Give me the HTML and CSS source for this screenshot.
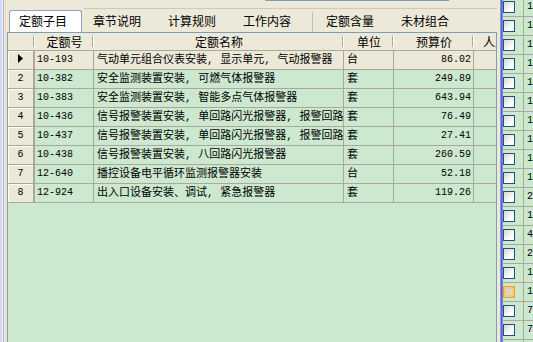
FILE: index.html
```html
<!DOCTYPE html>
<html lang="zh-CN">
<head>
  <meta charset="UTF-8">
  <meta name="viewport" content="width=device-width, initial-scale=1.0">
  <title>定额子目</title>
  <link rel="stylesheet" href="styles.css">
</head>
<body>
  <div class="app">
    <div class="edge"></div>

    <div class="main">
      <div class="tabbar">
        <div class="topline"></div>
        <div class="rule"></div>
        <div class="tabs">
          <div class="tab active">定额子目</div>
          <div class="tab">章节说明</div>
          <div class="tab">计算规则</div>
          <div class="tab">工作内容</div>
          <div class="tab-sep"></div>
          <div class="tab">定额含量</div>
          <div class="tab">未材组合</div>
        </div>
      </div>

      <div class="grid">
        <div class="row head">
          <div class="hc"></div>
          <div class="hc">定额号</div>
          <div class="hc">定额名称</div>
          <div class="hc">单位</div>
          <div class="hc">预算价</div>
          <div class="hc">人工费</div>
        </div>

        <div class="row current">
          <div class="c ind"><svg width="5" height="9" viewBox="0 0 5 9"><path d="M0 0 L5 4.5 L0 9 Z" fill="#000"/></svg></div>
          <div class="c num">10-193</div>
          <div class="c name">气动单元组合仪表安装, 显示单元, 气动报警器</div>
          <div class="c name">台</div>
          <div class="c num price">86.02</div>
          <div class="c"></div>
        </div>
        <div class="row">
          <div class="c ind">2</div>
          <div class="c num">10-382</div>
          <div class="c name">安全监测装置安装, 可燃气体报警器</div>
          <div class="c name">套</div>
          <div class="c num price">249.89</div>
          <div class="c"></div>
        </div>
        <div class="row">
          <div class="c ind">3</div>
          <div class="c num">10-383</div>
          <div class="c name">安全监测装置安装, 智能多点气体报警器</div>
          <div class="c name">套</div>
          <div class="c num price">643.94</div>
          <div class="c"></div>
        </div>
        <div class="row">
          <div class="c ind">4</div>
          <div class="c num">10-436</div>
          <div class="c name">信号报警装置安装, 单回路闪光报警器, 报警回路</div>
          <div class="c name">套</div>
          <div class="c num price">76.49</div>
          <div class="c"></div>
        </div>
        <div class="row">
          <div class="c ind">5</div>
          <div class="c num">10-437</div>
          <div class="c name">信号报警装置安装, 单回路闪光报警器, 报警回路</div>
          <div class="c name">套</div>
          <div class="c num price">27.41</div>
          <div class="c"></div>
        </div>
        <div class="row">
          <div class="c ind">6</div>
          <div class="c num">10-438</div>
          <div class="c name">信号报警装置安装, 八回路闪光报警器</div>
          <div class="c name">套</div>
          <div class="c num price">260.59</div>
          <div class="c"></div>
        </div>
        <div class="row">
          <div class="c ind">7</div>
          <div class="c num">12-640</div>
          <div class="c name">播控设备电平循环监测报警器安装</div>
          <div class="c name">台</div>
          <div class="c num price">52.18</div>
          <div class="c"></div>
        </div>
        <div class="row">
          <div class="c ind">8</div>
          <div class="c num">12-924</div>
          <div class="c name">出入口设备安装、调试, 紧急报警器</div>
          <div class="c name">套</div>
          <div class="c num price">119.26</div>
          <div class="c"></div>
        </div>
      </div>
    </div>

    <div class="splitter"></div>

    <div class="side">
      <div class="srows">
        <div class="srow"><div class="cb-cell"><div class="cb"></div></div><div class="sval">1</div></div>
        <div class="srow"><div class="cb-cell"><div class="cb"></div></div><div class="sval">1</div></div>
        <div class="srow"><div class="cb-cell"><div class="cb"></div></div><div class="sval">1</div></div>
        <div class="srow"><div class="cb-cell"><div class="cb"></div></div><div class="sval">1</div></div>
        <div class="srow"><div class="cb-cell"><div class="cb"></div></div><div class="sval">1</div></div>
        <div class="srow"><div class="cb-cell"><div class="cb"></div></div><div class="sval">1</div></div>
        <div class="srow"><div class="cb-cell"><div class="cb"></div></div><div class="sval">1</div></div>
        <div class="srow"><div class="cb-cell"><div class="cb"></div></div><div class="sval">1</div></div>
        <div class="srow"><div class="cb-cell"><div class="cb"></div></div><div class="sval">1</div></div>
        <div class="srow"><div class="cb-cell"><div class="cb"></div></div><div class="sval">1</div></div>
        <div class="srow"><div class="cb-cell"><div class="cb"></div></div><div class="sval">2</div></div>
        <div class="srow"><div class="cb-cell"><div class="cb"></div></div><div class="sval">1</div></div>
        <div class="srow"><div class="cb-cell"><div class="cb"></div></div><div class="sval">4</div></div>
        <div class="srow"><div class="cb-cell"><div class="cb"></div></div><div class="sval">2</div></div>
        <div class="srow"><div class="cb-cell"><div class="cb"></div></div><div class="sval">1</div></div>
        <div class="srow"><div class="cb-cell"><div class="cb hot"></div></div><div class="sval">1</div></div>
        <div class="srow"><div class="cb-cell"><div class="cb"></div></div><div class="sval">7</div></div>
        <div class="srow"><div class="cb-cell"><div class="cb"></div></div><div class="sval">7</div></div>
        <div class="srow"><div class="cb-cell"><div class="cb"></div></div><div class="sval">1</div></div>
      </div>
    </div>
  </div>
</body>
</html>
```

FILE: styles.css
```css
body {
  margin: 0;
  padding: 0;
  width: 533px;
  height: 342px;
  overflow: hidden;
  background-color: #ece9d8;
  font-family: "Noto Sans CJK SC", sans-serif;
  font-size: 12px;
  color: #000;
}

.app {
  display: flex;
  height: 342px;
}

/* 左边框 */
.edge {
  width: 7px;
  flex-shrink: 0;
  background: linear-gradient(to right,
    #d4d8e8 0 2px, #eef0f8 2px 3px, #9fb4e6 3px 4px,
    #f4ecdc 4px 5px, #f0d6a8 5px 6px, #ece9d8 6px 7px);
}

.main {
  width: 490px;
  flex-shrink: 0;
  display: flex;
  flex-direction: column;
}

/* 页签 */
.tabbar {
  height: 32px;
  display: flex;
  flex-direction: column;
}

.topline {
  height: 1px;
  width: 184px;
  margin-left: 258px;
  background-color: #7f9db9;
}

.rule {
  height: 1px;
  margin-top: 7px;
  margin-left: 77px;
  background-color: #cdcabb;
}

.tabs {
  display: flex;
  height: 22px;
  margin-top: 1px;
  padding-left: 2px;
}

.tab {
  width: 75px;
  box-sizing: border-box;
  padding-left: 11px;
  line-height: 22px;
  white-space: nowrap;
}

.tab.active {
  width: 73px;
  padding-left: 9px;
  line-height: 20px;
  background-color: #fff;
  border: 1px solid #8da2bf;
  border-bottom: 0;
  border-radius: 3px 3px 0 0;
}

.tab-sep {
  width: 1px;
  margin: 2px 2px 0 5px;
  background-color: #c3c0b0;
}

/* 表格 */
.grid {
  flex: 1;
  border: 1px solid #7f9db9;
  border-bottom: 0;
  background-color: #cce8cf;
  overflow: hidden;
}

.row {
  display: grid;
  grid-template-columns: 27px 59px 250px 50px 80px 54px;
  height: 19px;
}

.head {
  height: 18px;
}

.hc {
  box-sizing: border-box;
  border-bottom: 1px solid #aca899;
  line-height: 17px;
  text-align: center;
  white-space: nowrap;
  overflow: hidden;
  background:
    linear-gradient(#aca899, #aca899) no-repeat calc(100% - 1px) 50% / 1px 11px,
    linear-gradient(#fff, #fff) no-repeat 100% 50% / 1px 11px,
    #ece9d8;
}

.c {
  box-sizing: border-box;
  border-right: 1px solid #aca899;
  border-bottom: 1px solid #aca899;
  padding: 0 3px;
  line-height: 18px;
  white-space: nowrap;
  overflow: hidden;
}

.name {
  font-family: "Liberation Mono", "Noto Sans CJK SC", monospace;
  font-size: 11px;
}

.num {
  font-family: "Liberation Mono", monospace;
  font-size: 10px;
  padding-left: 2px;
}

.price {
  text-align: right;
  padding-right: 2px;
}

.ind {
  border-right-width: 2px;
  background-color: #ece9d8;
  box-shadow: inset 1px 1px 0 #fff;
  text-align: center;
  font-family: "Liberation Mono", monospace;
  font-size: 10px;
  padding: 0;
}

.ind svg {
  vertical-align: -1px;
}

.current .c {
  background-color: #ece9d8;
}

/* 分隔条 */
.splitter {
  width: 6px;
  flex-shrink: 0;
  background: linear-gradient(to right,
    #ece9d8 0 3px, #8c94e2 3px 4px, #5b64cb 4px 5px, #7a83da 5px 6px);
}

/* 右侧列表 */
.side {
  width: 30px;
  flex-shrink: 0;
  background-color: #cce8cf;
  overflow: hidden;
}

.srows {
  margin-top: -2px;
}

.srow {
  display: flex;
  height: 19px;
  box-sizing: border-box;
  border-bottom: 1px solid #aca899;
}

.cb-cell {
  width: 21px;
  box-sizing: border-box;
  border-right: 1px solid #aca899;
  padding-top: 3px;
}

.cb {
  width: 12px;
  height: 12px;
  box-sizing: border-box;
  border: 1px solid #1c5180;
  background: linear-gradient(135deg, #d8d8d0, #fff 75%);
}

.cb.hot {
  border-color: #e5a03a;
  box-shadow: inset 0 0 0 2px #fcc96e;
  background: #d8d8d0;
}

.sval {
  padding-left: 3px;
  font-family: "Liberation Mono", monospace;
  font-size: 10px;
  line-height: 18px;
}
```
